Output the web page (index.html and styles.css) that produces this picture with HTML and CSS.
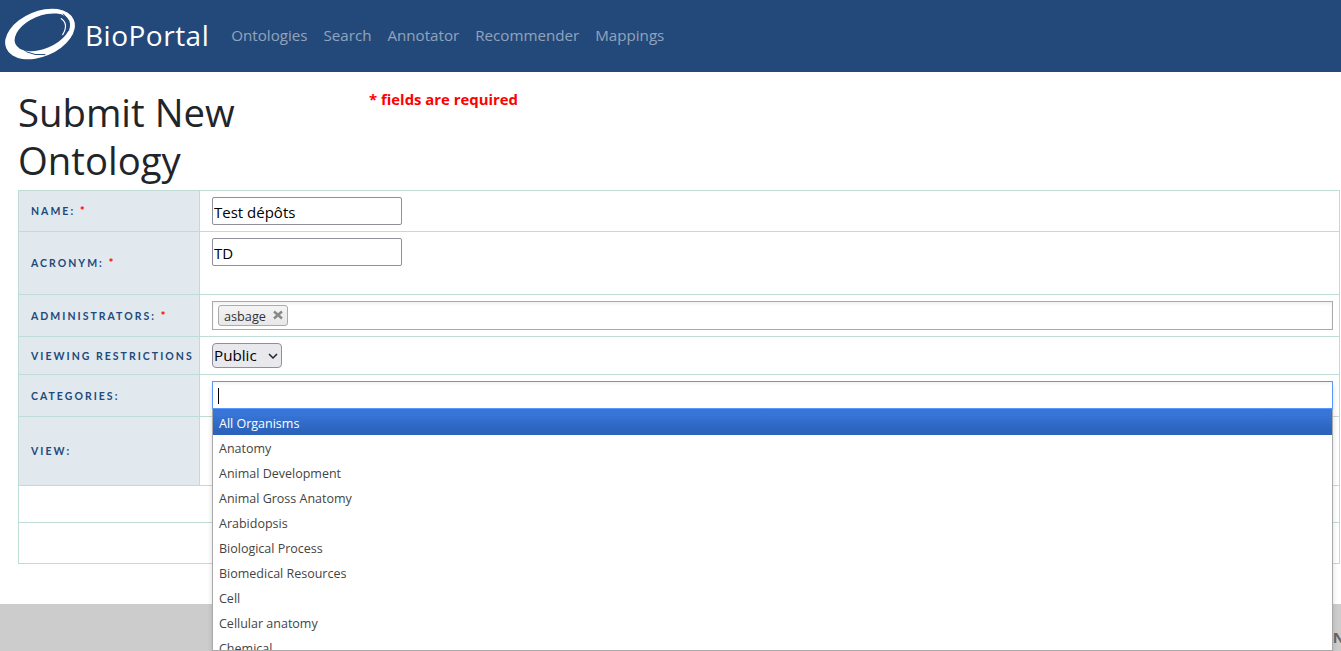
FILE: index.html
```html
<!DOCTYPE html>
<html lang="en">
<head>
<meta charset="utf-8">
<title>BioPortal</title>
<link rel="stylesheet" href="styles.css">
</head>
<body>
<header class="navbar">
  <a class="brand" href="#">
    <svg class="logo" width="84" height="60" viewBox="0 0 252 180" aria-hidden="true">
      <ellipse cx="120" cy="90" rx="110" ry="68" transform="rotate(-23 120 90)" fill="#fff"/>
      <ellipse cx="127" cy="85" rx="88" ry="49" transform="rotate(-23 127 85)" fill="#23497a"/>
      <path d="M184 44Q207 60 188 92" fill="none" stroke="#fff" stroke-width="3.5" stroke-linecap="round"/>
      <path d="M50 108Q68 158 135 152" fill="none" stroke="#23497a" stroke-width="3" stroke-linecap="round"/>
      <path d="M48 46Q58 36 72 30" fill="none" stroke="#23497a" stroke-width="3" stroke-linecap="round"/>
      <path d="M190 30Q212 48 206 80" fill="none" stroke="#23497a" stroke-width="3" stroke-linecap="round"/>
    </svg>
    <span class="brand-name">BioPortal</span>
  </a>
  <nav class="nav">
    <a href="#">Ontologies</a>
    <a href="#">Search</a>
    <a href="#">Annotator</a>
    <a href="#">Recommender</a>
    <a href="#">Mappings</a>
  </nav>
</header>

<main class="content">
  <div class="title-row">
    <h1 class="title">Submit New Ontology</h1>
    <p class="required">* fields are required</p>
  </div>

  <table class="form-table">
    <tr class="row-name">
      <th>Name: <span class="star">*</span></th>
      <td><input class="text-input" type="text" value="Test dépôts"></td>
    </tr>
    <tr class="row-acronym">
      <th>Acronym: <span class="star">*</span></th>
      <td class="top"><input class="text-input" type="text" value="TD"></td>
    </tr>
    <tr class="row-admins">
      <th>Administrators: <span class="star">*</span></th>
      <td>
        <div class="chosen-box">
          <span class="chip">asbage
            <svg class="chip-x" width="10" height="10" viewBox="0 0 10 10" aria-hidden="true"><path d="M1 1.5L9 8.5M9 1.5L1 8.5" fill="none" stroke="#888" stroke-width="2.4"/></svg>
          </span>
        </div>
      </td>
    </tr>
    <tr class="row-viewing">
      <th>Viewing Restrictions</th>
      <td><select class="select"><option>Public</option></select></td>
    </tr>
    <tr class="row-categories">
      <th>Categories:</th>
      <td></td>
    </tr>
    <tr class="row-view">
      <th>View:</th>
      <td></td>
    </tr>
    <tr class="row-blank-a"><td colspan="2"></td></tr>
    <tr class="row-blank-b"><td colspan="2"></td></tr>
  </table>

  <div class="chosen-open">
    <div class="search-box"><span class="caret"></span></div>
    <ul class="results">
      <li class="active">All Organisms</li>
      <li>Anatomy</li>
      <li>Animal Development</li>
      <li>Animal Gross Anatomy</li>
      <li>Arabidopsis</li>
      <li>Biological Process</li>
      <li>Biomedical Resources</li>
      <li>Cell</li>
      <li>Cellular anatomy</li>
      <li>Chemical</li>
    </ul>
  </div>
</main>

<footer class="footer"><span class="footer-text">N</span></footer>
</body>
</html>
```
FILE: styles.css
```css
* { box-sizing: border-box; }
html, body { margin: 0; padding: 0; height: 651px; overflow: hidden; background: #fff; }
body { font-family: "Open Sans", "Noto Sans", sans-serif; color: #212529; position: relative; }

.navbar { height: 72px; background: #23497a; display: flex; align-items: center; }
.brand { display: flex; align-items: center; text-decoration: none; color: #fff; }
.logo { display: block; margin-top: -4px; }
.brand-name { font-size: 28px; letter-spacing: 0.5px; margin-left: 1px; font-weight: 400; margin-top: -3px; }
.nav { display: flex; gap: 16px; margin-left: 22px; }
.nav a { color: rgba(255,255,255,.5); text-decoration: none; font-size: 15.15px; margin-top: -2px; }

.content { position: relative; padding: 16px 1px 0 18px; height: 532px; }
.title-row { display: flex; height: 102px; }
.title { margin: 0; width: 351px; font-size: 38.3px; line-height: 48px; font-weight: 400; padding-right: 90px; }
.required { margin: 1px 0 0; color: #f00; font-weight: 700; font-size: 14.9px; line-height: 20px; }

.form-table { width: 100%; height: 374px; border-collapse: collapse; table-layout: fixed; }
.form-table th, .form-table td { border: 1px solid #c0dcd6; padding: 0 6px 0 12px; vertical-align: middle; }
.form-table th {
  width: 181px; background: #e1e9ef; text-align: left;
  font-family: Lato, sans-serif; font-size: 10.5px; font-weight: 700; color: #23497a;
  letter-spacing: 2.02px; text-transform: uppercase; white-space: nowrap;
}
.form-table td.top { vertical-align: top; padding-top: 6px; }
.star { color: #f00; font-size: 12px; line-height: 0; letter-spacing: 0; }
.row-name { height: 41px; }
.row-acronym { height: 63px; }
.row-admins { height: 42px; }
.row-viewing { height: 38px; }
.row-categories { height: 42px; }
.row-view { height: 69px; }
.row-blank-a { height: 37px; }
.row-blank-b { height: 41px; }

.text-input {
  display: block; width: 190px; height: 28px; border: 1px solid #8f8f9d; border-radius: 2px;
  padding: 3px 1px 1px; font: 400 15px "Open Sans", sans-serif; color: #000; background: #fff;
}
.chosen-box {
  height: 29px; border: 1px solid #aaa; background: #fff; padding: 3px 5px;
  display: flex; align-items: flex-start;
  box-shadow: inset 0 2px 3px rgba(0,0,0,.06);
}
.chip {
  height: 21px; border: 1px solid #aaa; border-radius: 3px; background: linear-gradient(#f4f4f4, #e8e8e8);
  padding: 0 4px 0 5px; font-size: 12.7px; line-height: 20px; color: #333; display: flex; gap: 7px;
}
.chip-x { margin-top: 4px; }
.select {
  appearance: none; -webkit-appearance: none;
  height: 25px; width: 70px; border: 1px solid #8f8f9d; border-radius: 4px;
  padding: 0 0 2px 1px;
  background: #e9e9ed url("data:image/svg+xml,%3Csvg xmlns='http://www.w3.org/2000/svg' width='10' height='7'%3E%3Cpath d='M1 1l4 4 4-4' fill='none' stroke='%23222' stroke-width='1.5'/%3E%3C/svg%3E") no-repeat 55px 9px;
  font: 400 15.2px "Open Sans", sans-serif; color: #000; display: block;
}

.chosen-open {
  position: absolute; left: 212px; top: 309px; width: 1121px; height: 270px; overflow: hidden;
  background: #fff; box-shadow: 0 4px 5px rgba(0,0,0,.15);
}
.search-box { height: 28px; border: 1px solid #5897fb; background: linear-gradient(#f4f4f4 0, #fff 4px); padding: 6px 5px; }
.caret { display: block; width: 1px; height: 16px; background: #000; }
.results {
  list-style: none; margin: 0; padding: 0; height: 242px; overflow: hidden;
  font-size: 12.5px; color: #444; border: 1px solid #aaa; border-top: 0;
}
.results li { height: 25px; line-height: 27px; padding: 0 5px 0 6px; }
.results li.active { color: #fff; background: linear-gradient(#3875d7 20%, #2a62bc 90%); height: 26px; line-height: 29px; }

.footer { height: 47px; background: #ccc; text-align: right; overflow: hidden; }
.footer-text { font-weight: 700; font-size: 15px; color: #666; line-height: 66px; margin-right: -4px; }
```
